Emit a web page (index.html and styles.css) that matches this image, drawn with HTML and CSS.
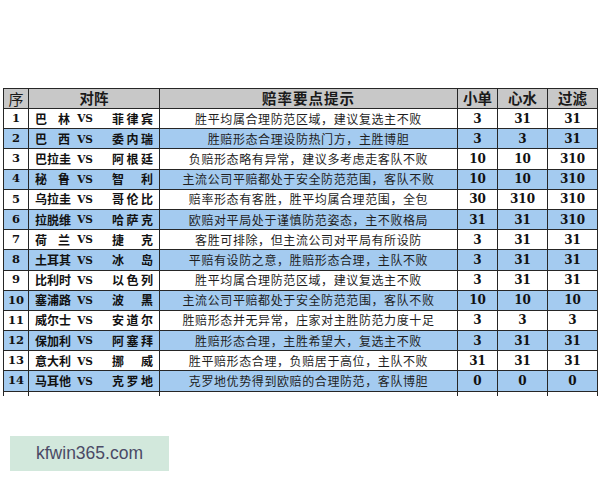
FILE: index.html
```html
<!DOCTYPE html>
<html lang="zh-CN">
<head>
<meta charset="utf-8">
<title>赔率要点提示</title>
<link rel="stylesheet" href="styles.css">
</head>
<body>
<div class="page">
<table class="odds">
<colgroup>
<col class="w-no"><col class="w-match"><col class="w-tip"><col class="w-a"><col class="w-b"><col class="w-c">
</colgroup>
<thead>
<tr><th class="h-no">序</th><th>对阵</th><th class="h-tip">赔率要点提示</th><th>小单</th><th>心水</th><th>过滤</th></tr>
</thead>
<tbody>
<tr><td class="no">1</td><td class="match"><div class="m"><span class="t1">巴林</span><span class="vs">VS</span><span class="t2">菲律宾</span></div></td><td class="tip">胜平均属合理防范区域，建议复选主不败</td><td class="n">3</td><td class="n">31</td><td class="n">31</td></tr>
<tr class="alt"><td class="no">2</td><td class="match"><div class="m"><span class="t1">巴西</span><span class="vs">VS</span><span class="t2">委内瑞</span></div></td><td class="tip">胜赔形态合理设防热门方，主胜博胆</td><td class="n">3</td><td class="n">3</td><td class="n">31</td></tr>
<tr><td class="no">3</td><td class="match"><div class="m"><span class="t1">巴拉圭</span><span class="vs">VS</span><span class="t2">阿根廷</span></div></td><td class="tip">负赔形态略有异常，建议多考虑走客队不败</td><td class="n">10</td><td class="n">10</td><td class="n">310</td></tr>
<tr class="alt"><td class="no">4</td><td class="match"><div class="m"><span class="t1">秘鲁</span><span class="vs">VS</span><span class="t2">智利</span></div></td><td class="tip">主流公司平赔都处于安全防范范围，客队不败</td><td class="n">10</td><td class="n">10</td><td class="n">310</td></tr>
<tr><td class="no">5</td><td class="match"><div class="m"><span class="t1">乌拉圭</span><span class="vs">VS</span><span class="t2">哥伦比</span></div></td><td class="tip">赔率形态有客胜，胜平均属合理范围，全包</td><td class="n">30</td><td class="n">310</td><td class="n">310</td></tr>
<tr class="alt"><td class="no">6</td><td class="match"><div class="m"><span class="t1">拉脱维</span><span class="vs">VS</span><span class="t2">哈萨克</span></div></td><td class="tip">欧赔对平局处于谨慎防范姿态，主不败格局</td><td class="n">31</td><td class="n">31</td><td class="n">310</td></tr>
<tr><td class="no">7</td><td class="match"><div class="m"><span class="t1">荷兰</span><span class="vs">VS</span><span class="t2">捷克</span></div></td><td class="tip">客胜可排除，但主流公司对平局有所设防</td><td class="n">3</td><td class="n">31</td><td class="n">31</td></tr>
<tr class="alt"><td class="no">8</td><td class="match"><div class="m"><span class="t1">土耳其</span><span class="vs">VS</span><span class="t2">冰岛</span></div></td><td class="tip">平赔有设防之意，胜赔形态合理，主队不败</td><td class="n">3</td><td class="n">31</td><td class="n">31</td></tr>
<tr><td class="no">9</td><td class="match"><div class="m"><span class="t1">比利时</span><span class="vs">VS</span><span class="t2">以色列</span></div></td><td class="tip">胜平均属合理防范区域，建议复选主不败</td><td class="n">3</td><td class="n">31</td><td class="n">31</td></tr>
<tr class="alt"><td class="no">10</td><td class="match"><div class="m"><span class="t1">塞浦路</span><span class="vs">VS</span><span class="t2">波黑</span></div></td><td class="tip">主流公司平赔都处于安全防范范围，客队不败</td><td class="n">10</td><td class="n">10</td><td class="n">10</td></tr>
<tr><td class="no">11</td><td class="match"><div class="m"><span class="t1">威尔士</span><span class="vs">VS</span><span class="t2">安道尔</span></div></td><td class="tip">胜赔形态并无异常，庄家对主胜防范力度十足</td><td class="n">3</td><td class="n">3</td><td class="n">3</td></tr>
<tr class="alt"><td class="no">12</td><td class="match"><div class="m"><span class="t1">保加利</span><span class="vs">VS</span><span class="t2">阿塞拜</span></div></td><td class="tip">胜赔形态合理，主胜希望大，复选主不败</td><td class="n">3</td><td class="n">31</td><td class="n">31</td></tr>
<tr><td class="no">13</td><td class="match"><div class="m"><span class="t1">意大利</span><span class="vs">VS</span><span class="t2">挪威</span></div></td><td class="tip">胜平赔形态合理，负赔居于高位，主队不败</td><td class="n">31</td><td class="n">31</td><td class="n">31</td></tr>
<tr class="alt"><td class="no">14</td><td class="match"><div class="m"><span class="t1">马耳他</span><span class="vs">VS</span><span class="t2">克罗地</span></div></td><td class="tip">克罗地优势得到欧赔的合理防范，客队博胆</td><td class="n">0</td><td class="n">0</td><td class="n">0</td></tr>
<tr class="stub"><td></td><td></td><td></td><td></td><td></td><td></td></tr>
</tbody>
</table>
</div>
<div class="wm">kfwin365.com</div>
</body>
</html>
```
FILE: styles.css
```css
html, body {
  margin: 0;
  padding: 0;
  background: #ffffff;
}
body {
  font-family: "Noto Sans CJK SC", "Noto Sans", sans-serif;
  color: #111111;
}
.page {
  padding: 88px 0 0 3px;
}
.odds {
  border-collapse: collapse;
  table-layout: fixed;
  width: 594px;
}
.w-no { width: 25px; }
.w-match { width: 131px; }
.w-tip { width: 298px; }
.w-a { width: 40px; }
.w-b { width: 50px; }
.w-c { width: 50px; }
.odds th,
.odds td {
  border: 1px solid #262626;
  padding: 0;
  text-align: center;
  vertical-align: middle;
  line-height: 1;
  white-space: nowrap;
}
.odds td {
  overflow: hidden;
}
.odds thead th {
  background: #c8c8c8;
  height: 19px;
  font-size: 14.5px;
  font-weight: 700;
  color: #1a1a1a;
}
.odds thead th.h-no {
  font-weight: 400;
  font-size: 15px;
}
.odds thead th.h-tip {
  letter-spacing: 1px;
}
.odds tbody td {
  height: 19.2px;
}
.odds tbody tr.alt td {
  background: #a4cbf0;
}
.odds td.no,
.odds td.n {
  font-family: "DejaVu Serif", "Liberation Serif", serif;
  font-weight: 700;
  font-size: 12px;
}
.odds td.no {
  font-size: 11.5px;
}
.odds td.tip {
  font-size: 12px;
  letter-spacing: 0.6px;
  color: #1e1e1e;
}
.m {
  display: flex;
  align-items: center;
  padding-left: 6px;
  font-weight: 700;
  font-size: 12px;
}
.t1, .t2 {
  display: block;
  text-align: justify;
  text-align-last: justify;
}
.t1 { width: 35px; }
.t2 { width: 41px; margin-left: 15px; }
.vs {
  display: block;
  width: 24px;
  margin-left: 3px;
  text-align: center;
  font-family: "DejaVu Serif", "Liberation Serif", serif;
  font-size: 10.5px;
  font-weight: 700;
}
.odds tbody tr.stub td {
  height: 4px;
  border-bottom: 0;
}
.wm {
  margin: 40px 0 0 10px;
  width: 159px;
  height: 35px;
  background: #d2e8dc;
  display: flex;
  align-items: center;
  justify-content: center;
  font-family: "Liberation Sans", Arial, sans-serif;
  font-size: 17.5px;
  color: #4b4a66;
}
```
